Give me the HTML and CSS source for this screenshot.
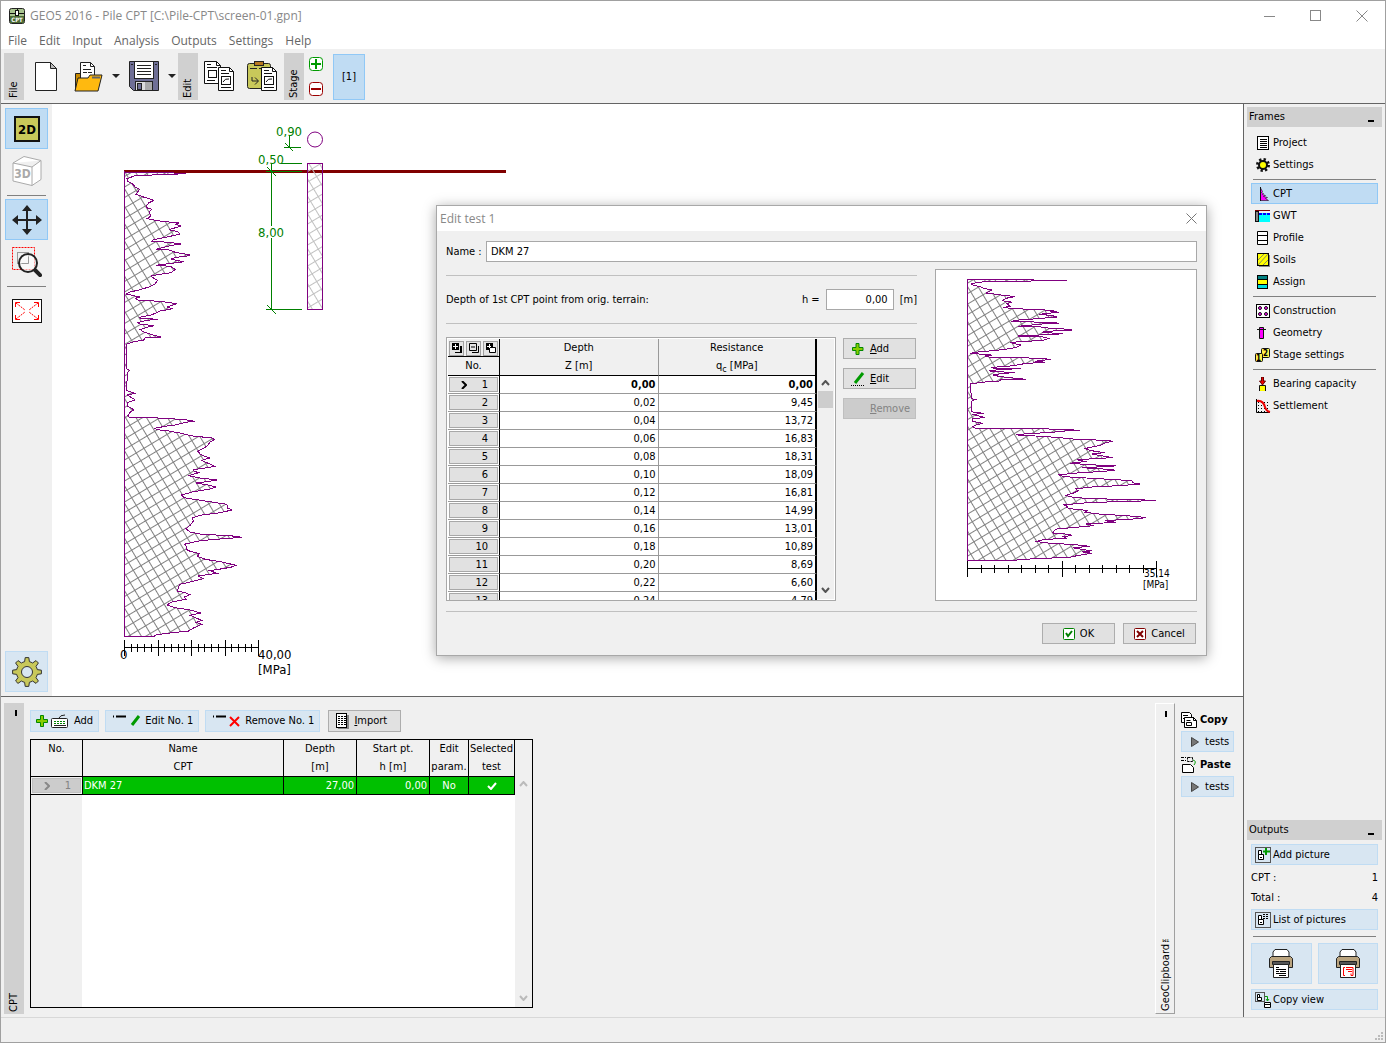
FILE: index.html
```
<!DOCTYPE html>
<html lang="en">

<head>
    <meta charset="UTF-8">
    <meta name="viewport" content="width=device-width, initial-scale=1.0">
    <title>GEO5 2016 - Pile CPT</title>
    <link rel="stylesheet" href="styles.css">
</head>

<body>
    <!-- TITLE BAR -->
    <header class="titlebar">
        <svg width="16" height="16" viewBox="0 0 16 16"><rect x=".5" y=".5" width="15" height="15" rx="2" fill="#a9c48f" stroke="#222"/><rect x="1" y="8" width="14" height="7" fill="#4c6b35"/><path d="M1 5.500h14M8.500 1v2" stroke="#111"/><rect x="6.500" y="2.500" width="3" height="5" fill="#fff" stroke="#111"/><text x="8" y="14" font-size="6" font-weight="bold" text-anchor="middle" class="svgtext" fill="#fff">CPT</text></svg>
        <span class="title">GEO5 2016 - Pile CPT [C:\Pile-CPT\screen-01.gpn]</span>
        <button class="winbtn" aria-label="Minimize"><svg width="12" height="12"><path d="M0 6.500h11" stroke="#888"/></svg></button>
        <button class="winbtn" aria-label="Maximize"><svg width="12" height="12"><rect x=".5" y=".5" width="10" height="10" fill="none" stroke="#888"/></svg></button>
        <button class="winbtn" aria-label="Close"><svg width="12" height="12"><path d="M.5 .5l11 11M11.500 .5l-11 11" stroke="#888"/></svg></button>
    </header>
    <nav class="menubar">
        <a href="#">File</a><a href="#">Edit</a><a href="#">Input</a><a href="#">Analysis</a><a href="#">Outputs</a><a href="#">Settings</a><a href="#">Help</a>
    </nav>

    <!-- TOOLBAR -->
    <div class="toolbar">
        <div class="tab">File</div>
        <button class="tool new" aria-label="New"><svg width="24" height="32"><path d="M1.500 1.500h15l6 6v22h-21z" fill="#fff" stroke="#222"/><path d="M16.500 1.500v6h6z" fill="#bbb" stroke="#222"/></svg></button>
        <button class="tool open" aria-label="Open"><svg width="30" height="32"><path d="M1.500 29V12.500h7l2 3h14V20" fill="#c88a00" stroke="#222"/><path d="M6.500 18V1.500h10l4 4V18z" fill="#fff" stroke="#222"/><path d="M16.500 1.500v4h4M9 4.500h3M9 8.500h8M9 11.500h4M14 11.500h4" fill="none" stroke="#222"/><path d="M1 30l3-13h10l2-3h12l-4 16z" fill="#ffb90f" stroke="#222"/><path d="M18 16.500h8" stroke="#666" stroke-width="2"/></svg></button>
        <button class="tool arrow" aria-label="Open recent"><svg width="8" height="5"><path d="M0 0h8l-4 4z" fill="#222"/></svg></button>
        <button class="tool save" aria-label="Save"><svg width="30" height="31"><path d="M.5 .5h29v29h-25l-4-4z" fill="#6f6f96" stroke="#222"/><rect x="5.500" y=".5" width="19" height="17" fill="#fff" stroke="#222"/><path d="M8 4.500h14M8 7.500h14M8 10.500h14M8 13.500h14M2 3.500h2M26 3.500h2" stroke="#222"/><rect x="6.500" y="20.500" width="17" height="9" fill="#ddd" stroke="#222"/><rect x="8.500" y="22.500" width="4" height="6" fill="#6f6f96" stroke="#222"/><path d="M16 21v8h7v-8z" fill="#aaa"/></svg></button>
        <button class="tool arrow" aria-label="Save as"><svg width="8" height="5"><path d="M0 0h8l-4 4z" fill="#222"/></svg></button>
        <div class="tab">Edit</div>
        <button class="tool copy" aria-label="Copy"><svg width="31" height="31"><path d="M.5 .5h12l4 4v18h-16z" fill="#fff" stroke="#111"/><path d="M12.500 .5v4h4M3 3.500h4M3 6.500h10M3 19.500h8" fill="none" stroke="#111"/><rect x="4.500" y="9.500" width="8" height="7" fill="#fff" stroke="#111"/><path d="M14.500 6.500h11l4 4v19h-15z" fill="#fff" stroke="#111"/><path d="M25.500 6.500v4h4M17 9.500h5M17 12.500h8M17 26.500h10" fill="none" stroke="#111"/><rect x="17.500" y="15.500" width="9" height="8" fill="#fff" stroke="#111"/><path d="M19 21q2-4 6-3" fill="none" stroke="#111"/></svg></button>
        <button class="tool paste" aria-label="Paste"><svg width="31" height="31"><rect x=".5" y="2.500" width="23" height="25" rx="2" fill="#c8c85a" stroke="#222"/><rect x="7.500" y=".5" width="9" height="4" fill="#b87820" stroke="#222"/><path d="M3 7.500h7M12 7.500h8M5 16v4h6M8 16.500l3.500 3.500-3.500 3.500" fill="none" stroke="#222" stroke-width="1"/><path d="M14.500 6.500h11l4 4v19h-15z" fill="#fff" stroke="#111"/><path d="M25.500 6.500v4h4M17 9.500h5M17 12.500h8M17 26.500h10" fill="none" stroke="#111"/><rect x="17.500" y="15.500" width="9" height="8" fill="#fff" stroke="#111"/><path d="M19 21q2-4 6-3" fill="none" stroke="#111"/></svg></button>
        <div class="tab">Stage</div>
        <div class="plusminus">
            <button aria-label="Add stage"><svg width="14" height="14"><rect x=".5" y=".5" width="13" height="13" rx="3" fill="#fff" stroke="#009a00"/><path d="M2 7h10M7 2v10" stroke="#009a00" stroke-width="2"/></svg></button>
            <button aria-label="Remove stage"><svg width="14" height="14"><rect x=".5" y=".5" width="13" height="13" rx="3" fill="#fff" stroke="#9a0000"/><path d="M2 7h10" stroke="#9a0000" stroke-width="2"/></svg></button>
        </div>
        <button class="stage">[1]</button>
    </div>

    <div class="main">
        <div class="left">
            <div class="workspace">
                <!-- VIEW TOOLS -->
                <div class="sidebar">
                    <button class="side active" aria-label="2D"><svg width="26" height="26"><rect x="1" y="1" width="24" height="24" fill="#c8c85a" stroke="#111" stroke-width="2"/><text x="13" y="18" font-size="13" font-weight="bold" text-anchor="middle" class="svgtext">2D</text></svg></button>
                    <button class="side" aria-label="3D"><svg width="30" height="30"><path d="M1 7L12 .5l17 4v19L20 29.500 1 25zM1 7l19 4 9-6.500M20 11v18.500" fill="#fff" stroke="#aaa"/><text x="10.500" y="22" font-size="12" font-weight="bold" text-anchor="middle" class="svgtext" fill="#aaa">3D</text></svg></button>
                    <hr>
                    <button class="side active" aria-label="Move"><svg width="30" height="30"><path d="M2 15h26M15 2v26" stroke="#222" stroke-width="2"/><path d="M15 0l5 6H10zM15 30l5-6H10zM0 15l6-5v10zM30 15l-6-5v10z" fill="#222"/></svg></button>
                    <button class="side" aria-label="Zoom window"><svg width="30" height="30"><rect x=".5" y=".5" width="22" height="22" fill="none" stroke="#f00" stroke-dasharray="2 1"/><rect x="5.500" y="5.500" width="11" height="11" fill="none" stroke="#999"/><circle cx="16" cy="16" r="9" fill="#fff" fill-opacity=".6" stroke="#222" stroke-width="2"/><path d="M9.500 16.500h7v-7" fill="none" stroke="#999"/><path d="M22.500 22.500l7 7" stroke="#222" stroke-width="4"/></svg></button>
                    <hr>
                    <button class="side" aria-label="Fit to screen"><svg width="30" height="24"><rect x=".5" y=".5" width="29" height="23" fill="#fff" stroke="#111"/><path d="M4 4l9 7M26 4l-9 7M4 20l9-7M26 20l-9-7" stroke="#f00" stroke-dasharray="2 1"/><path d="M3.500 8V3.500H8M22 3.500h4.500V8M3.500 16v4.500H8M22 20.500h4.500V16" fill="none" stroke="#f00"/></svg></button>
                    <button class="side light bottom" aria-label="View settings"><svg width="30" height="30" viewBox="-15 -15 30 30"><g fill="#c8c85a" stroke="#333" stroke-linejoin="round"><path id="cog" d="M-2.400 -10.300L-1.800 -14.400H1.800L2.400 -10.300A10.500 10.500 0 0 1 5.600 -9L9 -11.400 11.400 -9 9 -5.600A10.500 10.500 0 0 1 10.300 -2.400L14.400 -1.800V1.800L10.300 2.400A10.500 10.500 0 0 1 9 5.600L11.400 9 9 11.400 5.600 9A10.500 10.500 0 0 1 2.400 10.300L1.800 14.400H-1.800L-2.400 10.300A10.500 10.500 0 0 1 -5.600 9L-9 11.400 -11.400 9 -9 5.600A10.500 10.500 0 0 1 -10.300 2.400L-14.400 1.800V-1.800L-10.300 -2.400A10.500 10.500 0 0 1 -9 -5.600L-11.400 -9 -9 -11.400 -5.600 -9A10.500 10.500 0 0 1 -2.400 -10.300Z"/><circle r="5.500" fill="#d8e6f2"/></g></svg></button>
                </div>

                <!-- DRAWING -->
                <div class="canvas">
                    <svg class="drawing" shape-rendering="crispEdges">
                        <defs>
                            <pattern id="hatch" width="9" height="9" patternUnits="userSpaceOnUse" patternTransform="rotate(-31)"><path d="M0 .5h9M.5 0v9" stroke="#808080" fill="none"/></pattern>
                            <pattern id="hatchLight" width="9" height="9" patternUnits="userSpaceOnUse" patternTransform="rotate(-31)"><path d="M0 .5h9M.5 0v9" stroke="#c0c0c0" fill="none"/></pattern>
                        </defs>
                        <path d="M72 67.500h382" stroke="#800000" stroke-width="3"/>
                        <g id="mainLog"></g>
                        <rect x="255.500" y="59.500" width="15" height="146" fill="url(#hatchLight)" stroke="#800080"/>
                        <circle cx="263" cy="35.500" r="7.500" fill="none" stroke="#800080" shape-rendering="auto"/>
                        <path d="M232 43.500h17M237.500 31v12M233 39l8 8M219.500 60v146M229 59.500h21M214 67.500h36M214 205.500h36M215 63l9 9M215 201l9 9" stroke="#008000" fill="none"/>
                        <path d="M213 122h22v12h-22z" fill="#fff"/>
                        <g class="dims"><text x="224" y="32">0,90</text><text x="206" y="60">0,50</text><text x="206" y="133">8,00</text></g>
                        <path id="mainScale" stroke="#000" fill="none"/>
                        <g class="scale"><text x="68" y="555">0</text><text x="206" y="555">40,00</text><text x="206" y="570">[MPa]</text></g>
                    </svg>

                    <!-- DIALOG -->
                    <section class="dialog">
                        <div class="dialog-title"><span>Edit test 1</span><button class="close" aria-label="Close"><svg width="11" height="11"><path d="M.5 .5l10 10M10.500 .5l-10 10" stroke="#777"/></svg></button></div>
                        <div class="dialog-body">
                            <div class="field"><label for="testName">Name :</label><input type="text" id="testName" value="DKM 27"></div>
                            <div class="dialog-cols">
                                <div class="dialog-form">
                                    <hr>
                                    <div class="depth"><span>Depth of 1st CPT point from orig. terrain:</span><label for="depthH">h =</label><input type="text" id="depthH" value="0,00"><span>[m]</span></div>
                                    <hr>
                                    <div class="points">
                                        <div class="grid">
                                            <table class="pts">
                                                <thead>
                                                    <tr>
                                                        <th class="rowno"><div class="minis">
                                                            <button aria-label="Append row"><svg width="10" height="10"><path d="M0 0h7v7H0zM8 3h2v7H3V9h5z"/><path d="M1 3.500h5M3.500 1v5" stroke="#fff"/></svg></button>
                                                            <button aria-label="Delete row"><svg width="10" height="10"><path d="M.5 .5h7v7h-7zM2 4h4M9.500 3v6.500H3" fill="none" stroke="#000"/></svg></button>
                                                            <button aria-label="Insert row"><svg width="10" height="10"><path d="M0 0h7v7H0z"/><path d="M3.500 4.500h6v5h-6z" fill="#fff" stroke="#000"/><path d="M1 3.500h4M3.500 1v4" stroke="#fff"/></svg></button>
                                                        </div>No.</th>
                                                        <th>Depth<br>Z [m]</th>
                                                        <th>Resistance<br>q<sub>c</sub> [MPa]</th>
                                                    </tr>
                                                </thead>
                                                <tbody id="ptsBody"></tbody>
                                            </table>
                                            <div class="scroll"><svg class="up" width="9" height="6"><path d="M1 5l3.500-4 3.500 4" fill="none" stroke="#555" stroke-width="2"/></svg><span class="thumb"></span><svg class="down" width="9" height="6"><path d="M1 1l3.500 4 3.500-4" fill="none" stroke="#555" stroke-width="2"/></svg></div>
                                        </div>
                                        <div class="actions">
                                            <button class="btn"><svg width="14" height="14"><path d="M5 1.500h3v4h4v3h-4v4H5v-4H1.500v-3H5z" fill="#8c0" stroke="#080"/></svg><span><u>A</u>dd</span></button>
                                            <button class="btn"><svg width="14" height="14"><path d="M4 11L12 1" stroke="#009a00" stroke-width="3"/><path d="M0 13.500h13" stroke="#000" stroke-dasharray="1 1"/></svg><span><u>E</u>dit</span></button>
                                            <button class="btn" disabled><svg width="14" height="14"></svg><span><u>R</u>emove</span></button>
                                        </div>
                                    </div>
                                </div>
                                <div class="preview">
                                    <svg width="260" height="330" shape-rendering="crispEdges">
                                        <g id="previewLog"></g>
                                        <path id="previewScale" stroke="#000" fill="none"/>
                                        <g class="small"><text x="208" y="307">35,14</text><text x="207" y="318">[MPa]</text></g>
                                    </svg>
                                </div>
                            </div>
                            <hr>
                            <div class="confirm">
                                <button class="btn"><svg width="12" height="12"><rect x=".5" y=".5" width="11" height="11" rx="1" fill="#fff" stroke="#008000"/><path d="M3 5l2 3 4-5" fill="none" stroke="#008000" stroke-width="2"/></svg><span>OK</span></button>
                                <button class="btn"><svg width="12" height="12"><rect x=".5" y=".5" width="11" height="11" rx="1" fill="#fff" stroke="#800000"/><path d="M3 3l6 6M9 3l-6 6" stroke="#800000" stroke-width="2"/></svg><span>Cancel</span></button>
                            </div>
                        </div>
                    </section>
                </div>
            </div>

            <!-- BOTTOM FRAME -->
            <div class="frame">
                <div class="tab tall"><i class="pin"></i>CPT</div>
                <div class="tests">
                    <div class="testbar">
                        <button class="lbtn"><svg width="34" height="16"><path d="M4.500 2.500h3v4h4v3h-4v4h-3v-4H.5v-3h4z" fill="#8c0" stroke="#080"/><rect x="15.500" y="5.500" width="16" height="9" rx="1" fill="#fff" stroke="#222"/><path d="M18 8.500h12M18 10.500h12" stroke="#008000" stroke-width="1" stroke-dasharray="2 1"/><path d="M18 12.500h12M23 5q1-3 6-3" stroke="#222" fill="none"/></svg><span>Add</span></button>
                        <button class="lbtn"><svg width="30" height="16"><path d="M2 3.500h1M5 3.500h10" stroke="#000" stroke-width="2"/><path d="M21 12l7-9" stroke="#009a00" stroke-width="3"/></svg><span>Edit No. 1</span></button>
                        <button class="lbtn"><svg width="30" height="16"><path d="M2 3.500h1M5 3.500h10" stroke="#000" stroke-width="2"/><path d="M19 4l9 9M28 4l-9 9" stroke="#f00" stroke-width="2"/></svg><span>Remove No. 1</span></button>
                        <button class="btn import"><svg width="13" height="16"><rect x="2" y="2" width="11" height="14" fill="#888"/><rect x=".5" y=".5" width="10" height="14" fill="#fff" stroke="#000"/><path d="M3 3v9M6 3v9M9 3v9" stroke="#000" stroke-dasharray="1 1" stroke-width="2"/></svg><span><u>I</u>mport</span></button>
                    </div>
                    <div class="testgrid">
                        <div class="testmain">
                            <table class="tst">
                                <thead>
                                    <tr><th class="c1">No.<br>&nbsp;</th><th class="c2">Name<br>CPT</th><th class="c3">Depth<br>[m]</th><th class="c3">Start pt.<br>h [m]</th><th class="c5">Edit<br>param.</th><th class="c6">Selected<br>test</th></tr>
                                </thead>
                                <tbody>
                                    <tr><th class="head"><div><svg width="6" height="8"><path d="M1 0l4 4-4 4" fill="none" stroke="#888" stroke-width="2"/></svg>1</div></th><td>DKM 27</td><td class="num">27,00</td><td class="num">0,00</td><td class="mid">No</td><td class="mid"><svg width="10" height="8"><path d="M1 4l3 3 5-6" fill="none" stroke="#fff" stroke-width="2"/></svg></td></tr>
                                </tbody>
                            </table>
                            <div class="blank"></div>
                        </div>
                        <div class="scroll faint"><svg class="up" width="9" height="6"><path d="M1 5l3.500-4 3.500 4" fill="none" stroke="#bbb" stroke-width="2"/></svg><svg class="down" width="9" height="6"><path d="M1 1l3.500 4 3.500-4" fill="none" stroke="#bbb" stroke-width="2"/></svg></div>
                    </div>
                </div>
                <div class="tab tall geo"><i class="pin"></i>GeoClipboard™</div>
                <div class="clip">
                    <div class="cliphead"><svg width="16" height="16"><path d="M.5 .5h8l2 2v8H.5zM2 3.500h5M2 6.500h3" fill="#fff" stroke="#000"/><path d="M3.500 5.500h9l3 3v7h-12z" fill="#fff" stroke="#000"/><path d="M12.500 5v3.500h3M5.500 8.500h4M5.500 10.500h5v3h-5z" fill="none" stroke="#000"/></svg>Copy</div>
                    <button class="lbtn play"><svg width="8" height="10"><path d="M.5 .5l7 4.500-7 4.500z" fill="#777" stroke="#444"/></svg><span>tests</span></button>
                    <div class="cliphead"><svg width="16" height="16"><path d="M0 .5h5M0 3.500h5M6.500 .5h5v4h-5z" fill="none" stroke="#000" stroke-dasharray="3 1"/><path d="M1.500 7.500h8l3 3v5h-11z" fill="#fff" stroke="#000"/><path d="M12 3q4 1 1 5" fill="none" stroke="#009a00" stroke-width="1"/></svg>Paste</div>
                    <button class="lbtn play"><svg width="8" height="10"><path d="M.5 .5l7 4.500-7 4.500z" fill="#777" stroke="#444"/></svg><span>tests</span></button>
                </div>
            </div>
        </div>

        <!-- RIGHT PANEL -->
        <aside class="panel">
            <h2>Frames<i></i></h2>
            <div class="list">
                <button class="item"><svg width="16" height="14"><rect x="2.500" y=".5" width="11" height="13" fill="#fff" stroke="#000"/><path d="M5 3.500h7M5 5.500h7M5 7.500h7M5 9.500h7M5 11.500h7" stroke="#000"/></svg>Project</button>
                <button class="item"><svg width="16" height="14"><circle cx="8" cy="7" r="5.500" fill="none" stroke="#111" stroke-width="3" stroke-dasharray="2.200 2.100"/><circle cx="8" cy="7" r="4" fill="#ff0" stroke="#111" stroke-width="2"/></svg>Settings</button>
                <hr>
                <button class="item active"><svg width="16" height="14"><path d="M5.500 1v12.500h8l-3-2 2-1-4-1 2-1-3-1 1-1-2-1 1-1z" fill="#f0f" stroke="#111" stroke-width=".6"/><path d="M5.500 0v14" stroke="#111"/></svg>CPT</button>
                <button class="item"><svg width="16" height="14"><path d="M0 1.500h15" stroke="#800000"/><rect x="4" y="4" width="11" height="9" fill="#0ff"/><path d="M4 5h11" stroke="#00f" stroke-width="2" stroke-dasharray="3 1"/><rect x=".5" y="2.500" width="3" height="10" fill="#888" stroke="#111"/></svg>GWT</button>
                <button class="item"><svg width="16" height="14"><path d="M2.500 .5h10v13h-10zM2.500 4.500h10M2.500 9.500h10" fill="#fff" stroke="#000"/></svg>Profile</button>
                <button class="item"><svg width="16" height="14"><rect x="4" y="2" width="11" height="12" fill="#888"/><rect x="2.500" y=".5" width="11" height="12" fill="#ff0" stroke="#000"/><path d="M3 7l6-6M3 12l10-11M8 12l5-5" stroke="#886"/></svg>Soils</button>
                <button class="item"><svg width="16" height="14"><rect x="2.500" y=".5" width="10" height="13" fill="#ff0" stroke="#000"/><path d="M3 2.500h9" stroke="#008080" stroke-width="3"/><path d="M3 11.500h9" stroke="#0dd" stroke-width="3"/><path d="M2 4.500h11M2 9.500h11" stroke="#000"/></svg>Assign</button>
                <hr>
                <button class="item"><svg width="16" height="14"><rect x="1.500" y=".5" width="13" height="13" fill="#fff" stroke="#000"/><g fill="#f0f" stroke="#111"><circle cx="5" cy="4" r="1.500"/><circle cx="11" cy="4" r="1.500"/><circle cx="5" cy="10" r="1.500"/><circle cx="11" cy="10" r="1.500"/></g></svg>Construction</button>
                <button class="item"><svg width="16" height="14"><path d="M4.500 1.500h4v11h-4z" fill="#f0f" stroke="#111"/><path d="M2 3.500h9" stroke="#111"/></svg>Geometry</button>
                <button class="item"><svg width="16" height="14"><g fill="#fff04a" stroke="#111"><rect x="6.500" y=".5" width="8" height="9" rx="1"/><rect x=".5" y="5.500" width="7" height="8" rx="1"/></g><g class="svgtext" font-size="8" font-weight="bold"><text x="8" y="8">2</text><text x="1" y="13">1</text></g></svg>Stage settings</button>
                <hr>
                <button class="item"><svg width="16" height="14"><path d="M4.500 8.500h6v6h-6z" fill="#ff0" stroke="#111"/><path d="M6.500 0h2v4h2l-3 4-3-4h2z" fill="#e00" stroke="#600"/></svg>Bearing capacity</button>
                <button class="item"><svg width="16" height="14"><path d="M3 3.500h12M3 6.500h12M3 9.500h12M3 12.500h12" stroke="#000" stroke-dasharray="1 2"/><path d="M1.500 0v13.500H15" fill="none" stroke="#000"/><path d="M2 2q6-1 8 6 1 4 5 5" fill="none" stroke="#e00" stroke-width="2"/></svg>Settlement</button>
            </div>
            <h2 class="outputs">Outputs<i></i></h2>
            <div class="list pictures">
                <button class="item light"><svg width="16" height="16"><rect x=".5" y=".5" width="15" height="15" fill="none" stroke="#555"/><path d="M3.500 3.500h3v4h-3zM3.500 7.500h5v5h-5zM5 10.500h2" fill="#fff" stroke="#000"/><path d="M11 1v7M8 4.500h7" stroke="#009a00" stroke-width="2"/></svg>Add picture</button>
                <div class="count"><span>CPT :</span><span>1</span></div>
                <div class="count"><span>Total :</span><span>4</span></div>
                <button class="item light"><svg width="16" height="16"><rect x=".5" y=".5" width="15" height="15" fill="none" stroke="#555"/><path d="M3.500 3.500h3v4h-3zM3.500 7.500h5v5h-5zM5 10.500h2" fill="#fff" stroke="#000"/><path d="M8 2.500h6M8 4.500h6M8 6.500h6" stroke="#000" stroke-dasharray="2 1"/></svg>List of pictures</button>
                <hr>
                <div class="printers">
                    <button class="print" aria-label="Print"><svg width="24" height="30"><path d="M4 8V3l2-2.500h12L20 3v5z" fill="#fff" stroke="#222"/><path d="M.5 9.500l2-2h19l2 2v9h-23z" fill="#b9a37e" stroke="#222"/><path d="M3.500 12.500h17v3h-17z" fill="#555" stroke="#222"/><path d="M4.500 15.500h15v13h-15z" fill="#fff" stroke="#222"/><path d="M7 18.500h3M7 20.500h10M7 22.500h3M11 22.500h6M7 24.500h10M10 26.500h7" stroke="#000"/></svg></button>
                    <button class="print" aria-label="Print view"><svg width="24" height="30"><path d="M4 8V3l2-2.500h12L20 3v5z" fill="#fff" stroke="#222"/><path d="M.5 9.500l2-2h19l2 2v9h-23z" fill="#b9a37e" stroke="#222"/><path d="M3.500 12.500h17v3h-17z" fill="#555" stroke="#222"/><path d="M4.500 15.500h15v13h-15z" fill="#fff" stroke="#222"/><path d="M9 18.500H7.500v8H9M10 18.500h7v8h-2v-2M10 20.500h6M12 22.500h4" fill="none" stroke="#f00"/></svg></button>
                </div>
                <button class="item light"><svg width="16" height="16"><rect x=".5" y=".5" width="9" height="9" fill="none" stroke="#555"/><path d="M2.500 2.500h2v3h-2zM2.500 5.500h4v3h-4z" fill="#fff" stroke="#000"/><path d="M10 4.500h2.500v4M11 7l1.500 2 1.500-2" fill="none" stroke="#009a00"/><path d="M9.500 10.500h6v5h-6zM9 12.500h7" fill="#fff" stroke="#000"/></svg>Copy view</button>
            </div>
        </aside>
    </div>

    <footer class="status"><svg width="10" height="10" fill="#bbb"><path d="M6 0h2v2H6zM3 3h2v2H3zM6 3h2v2H6zM0 6h2v2H0zM3 6h2v2H3zM6 6h2v2H6z"/></svg></footer>

    <script src="script.js"></script>
</body>

</html>
```

FILE: styles.css
```
* {
    box-sizing: border-box;
}

body {
    margin: 0;
    min-height: 100vh;
    display: flex;
    flex-direction: column;
    border: 1px solid #a0a0a0;
    background: #f0f0f0;
    color: #000;
    font: 11px/18px "DejaVu Sans Condensed", "DejaVu Sans", sans-serif;
}

button,
input {
    font: inherit;
    color: inherit;
}

button {
    border: 0;
    padding: 0;
    background: none;
    display: flex;
    align-items: center;
}

svg {
    display: block;
    flex: none;
}

hr {
    border: 0;
    height: 1px;
    margin: 0;
    background: #808080;
}

.svgtext {
    font-family: "DejaVu Sans Condensed", sans-serif;
}

/* title and menu */
.titlebar {
    display: flex;
    align-items: center;
    height: 29px;
    padding-left: 8px;
    background: #fff;
    color: #888;
    font: 12px/18px "Open Sans", sans-serif;
}

.title {
    flex: 1;
    margin-left: 5px;
}

.winbtn {
    width: 46px;
    height: 28px;
    justify-content: center;
}

.menubar {
    display: flex;
    gap: 12px;
    padding: 2px 7px 0;
    height: 19px;
    background: #fff;
    font: 12px/17px "Open Sans", sans-serif;
}

.menubar a {
    color: #666;
    text-decoration: none;
}

/* toolbar */
.toolbar {
    display: flex;
    align-items: center;
    height: 55px;
    padding: 1px 3px 0;
    border-bottom: 1px solid #646464;
}

.tab {
    width: 20px;
    height: 47px;
    padding: 2px 0;
    background: #d0d0d0;
    writing-mode: vertical-rl;
    transform: rotate(180deg);
    line-height: 20px;
    text-align: left;
}

.tool {
    height: 40px;
    justify-content: center;
}

.new {
    width: 44px;
}

.open {
    width: 42px;
}

.arrow {
    width: 12px;
}

.save {
    width: 44px;
}

.copy,
.paste {
    width: 43px;
}

.plusminus {
    display: flex;
    flex-direction: column;
    gap: 11px;
    margin: 0 10px 0 5px;
}

.stage {
    width: 32px;
    height: 46px;
    justify-content: center;
    background: #c0dcf3;
    border: 1px solid #90c8f6;
}

/* workspace */
.main,
.workspace {
    display: flex;
    flex: 1;
}

.left {
    flex: 1;
    min-width: 0;
    display: flex;
    flex-direction: column;
}

.sidebar {
    display: flex;
    flex-direction: column;
    gap: 1px;
    width: 51px;
    padding: 4px;
}

.sidebar hr {
    width: 39px;
    margin: 3px 2px 2px;
}

.side {
    width: 43px;
    height: 41px;
    justify-content: center;
    border: 1px solid transparent;
}

.side.active,
.item.active {
    background: #c0dcf3;
    border-color: #90c8f6;
}

.side.light {
    background: #d8e6f2;
    border-color: #c0dcf3;
}

.bottom {
    margin-top: auto;
}

.canvas {
    position: relative;
    flex: 1;
    background: #fff;
}

.drawing {
    width: 100%;
    height: 100%;
    min-height: 580px;
}

.dims {
    fill: #008000;
    font-size: 13px;
}

.scale {
    font-size: 13px;
}

.small {
    font-size: 10px;
}

/* dialog */
.dialog {
    position: absolute;
    left: 384px;
    top: 101px;
    width: 771px;
    border: 1px solid #a8a8a8;
    background: #f0f0f0;
    box-shadow: 0 2px 12px rgba(0, 0, 0, .35);
}

.dialog-title {
    display: flex;
    align-items: center;
    justify-content: space-between;
    height: 25px;
    padding: 0 9px 0 3px;
    background: #fff;
    color: #888;
    font: 12px/18px "Open Sans", sans-serif;
}

.dialog-body {
    padding: 10px 9px 11px;
}

.dialog hr {
    background: #c0c0c0;
}

.dialog input {
    height: 21px;
    padding: 0 5px;
    border: 1px solid #a8a8a8;
    background: #fff;
}

.field {
    display: flex;
    align-items: center;
    gap: 5px;
}

.field label {
    width: 35px;
    white-space: nowrap;
}

.field .wide,
.field input {
    flex: 1;
    padding: 0 4px;
}

.dialog-cols {
    display: flex;
    gap: 18px;
    margin: 7px 0 10px;
}

.dialog-form {
    flex: 1;
    padding-top: 6px;
}

.depth {
    display: flex;
    align-items: center;
    gap: 6px;
    height: 47px;
}

.depth span:first-child {
    flex: 1;
}

.depth input {
    width: 68px;
    text-align: right;
}

.points {
    display: flex;
    gap: 7px;
    margin-top: 13px;
}

.grid {
    flex: 1;
    display: flex;
    height: 264px;
    overflow: hidden;
    padding: 1px;
    border: 1px solid #a8a8a8;
    background: #fff;
}

.pts {
    flex: 1;
    width: 100%;
    align-self: flex-start;
    border-spacing: 0;
    table-layout: fixed;
}

.pts th {
    padding: 0;
    height: 36px;
    font-weight: normal;
    background: #f0f0f0;
    border-right: 1px solid #999;
    border-bottom: 1px solid #000;
}

.pts sub {
    font-size: 9px;
    line-height: 1px;
}

.pts th.rowno {
    width: 52px;
}

.pts th:first-child {
    border-right-color: #000;
}

.pts th:last-child,
.pts td:last-child {
    border-right: 2px solid #000;
}

.pts td {
    height: 18px;
    padding: 0 2px;
    line-height: 17px;
    text-align: right;
    background: #fff;
    border-right: 1px solid #999;
    border-bottom: 1px solid #999;
}

.pts tbody th {
    height: 18px;
    border-right: 1px solid #000;
    border-bottom-color: #999;
    background: #fff;
}

.pts tr:first-child td {
    font-weight: bold;
}

.minis {
    display: flex;
    gap: 2px;
    height: 17px;
    padding: 1px;
    border-bottom: 1px solid #000;
}

.minis button {
    width: 15px;
    height: 15px;
    justify-content: center;
    border: 1px solid #a0a0a0;
    background: #e4e4e4;
}

.rowbtn,
.head div {
    display: flex;
    align-items: center;
    justify-content: flex-end;
    gap: 15px;
    height: 15px;
    margin: 1px;
    padding-right: 9px;
    border: 1px solid #a8a8a8;
    background: #e1e1e1;
}

.scroll {
    flex: none;
    display: flex;
    flex-direction: column;
    align-items: center;
    width: 17px;
    padding: 41px 0 6px;
    background: #f0f0f0;
}

.thumb {
    width: 15px;
    height: 17px;
    margin-top: 5px;
    background: #cdcdcd;
}

.down {
    margin-top: auto;
}

.actions {
    display: flex;
    flex-direction: column;
    gap: 9px;
    width: 73px;
    padding-top: 1px;
    margin-right: 1px;
}

.btn {
    gap: 5px;
    height: 21px;
    padding: 0 7px;
    border: 1px solid #adadad;
    background: #e1e1e1;
}

.btn:disabled {
    color: #838383;
    background: #ccc;
    border-color: #bfbfbf;
}

.preview {
    width: 262px;
    border: 1px solid #a8a8a8;
    background: #fff;
}

.confirm {
    display: flex;
    justify-content: flex-end;
    gap: 8px;
    margin-top: 11px;
    padding-right: 1px;
}

.confirm .btn {
    width: 73px;
    justify-content: center;
}

/* bottom frame */
.frame {
    display: flex;
    height: 321px;
    padding: 6px 3px 3px;
    border-top: 1px solid #646464;
}

.tall {
    height: auto;
    position: relative;
}

.pin {
    position: absolute;
    left: 7px;
    bottom: 7px;
    width: 2px;
    height: 6px;
    background: #000;
}

.tests {
    flex: 1;
    display: flex;
    flex-direction: column;
    gap: 7px;
    padding: 7px 6px 6px;
}

.testbar {
    display: flex;
    gap: 6px;
}

.lbtn {
    gap: 4px;
    height: 22px;
    padding: 0 5px;
    border: 1px solid #c0dcf3;
    background: #d8e6f2;
}

.import {
    height: 22px;
    width: 73px;
    margin-left: 2px;
}

.testgrid {
    flex: 1;
    display: flex;
    width: 503px;
    border: 1px solid #000;
}

.testmain {
    flex: 1;
    display: flex;
    flex-direction: column;
}

.tst {
    width: 100%;
    border-spacing: 0;
    table-layout: fixed;
}

.tst th,
.tst td {
    padding: 0 1px;
    font-weight: normal;
    border-right: 1px solid #000;
    border-bottom: 1px solid #000;
}

.tst td {
    height: 18px;
    line-height: 17px;
    color: #fff;
    background: #00c000;
}

.c1 {
    width: 52px;
}

.c2 {
    width: 201px;
}

.c3 {
    width: 73px;
}

.c5 {
    width: 39px;
}

.c6 {
    width: 46px;
    white-space: nowrap;
}

.tst .num {
    padding-right: 2px;
    text-align: right;
}

.tst .mid {
    text-align: center;
}

.mid svg {
    margin: auto;
}

.tst .head {
    padding: 0;
}

.head div {
    color: #838383;
    background: #ccc;
    border-color: #bfbfbf;
}

.blank {
    flex: 1;
    margin: 0 0 0 51px;
    background: #fff;
}

.geo {
    background: #f0f0f0;
    border-right: 1px solid #fff;
    border-bottom: 1px solid #fff;
    border-left: 1px solid #a0a0a0;
    border-top: 1px solid #a0a0a0;
}

.clip {
    display: flex;
    flex-direction: column;
    width: 65px;
    padding: 5px 6px 0;
}

.cliphead {
    display: flex;
    align-items: center;
    gap: 3px;
    height: 23px;
    font-weight: bold;
}

.play {
    height: 21px;
    gap: 6px;
    padding-left: 9px;
    margin-bottom: 1px;
}

/* right panel */
.panel {
    display: flex;
    flex-direction: column;
    width: 142px;
    padding: 3px 3px 2px;
    border-left: 1px solid #646464;
}

.panel h2 {
    display: flex;
    justify-content: space-between;
    height: 20px;
    margin: 0;
    padding: 0 8px 0 2px;
    background: #d0d0d0;
    font-size: 11px;
    font-weight: normal;
    line-height: 20px;
}

.panel h2 i {
    width: 6px;
    height: 2px;
    margin-top: 13px;
    background: #000;
}

.panel .outputs {
    margin-top: auto;
}

.list {
    padding: 5px 4px 4px;
}

.list.pictures {
    padding-top: 4px;
}

.list hr {
    margin: 4px 2px 3px;
}

.item {
    gap: 2px;
    width: 100%;
    height: 21px;
    margin-bottom: 1px;
    padding: 0 3px;
    border: 1px solid transparent;
    white-space: nowrap;
}

.item.light,
.print {
    background: #d8e6f2;
    border: 1px solid #c0dcf3;
}

.count {
    display: flex;
    justify-content: space-between;
    line-height: 20px;
}

.count + .item {
    margin: 1px 0 6px;
}

.item + .count {
    margin-top: 3px;
}

.printers {
    display: flex;
    gap: 6px;
    margin: 6px 0 5px;
}

.print {
    flex: 1;
    height: 41px;
    justify-content: center;
}

.status {
    display: flex;
    align-items: flex-end;
    justify-content: flex-end;
    height: 25px;
    border-top: 1px solid #d8d8d8;
}
```

FILE: script.js
```
// CPT log: resistance, depth (drawing units)
const log = "0,0 147,3 185,5 107,8 32,11 7,20 9,27 23,35 32,45 45,52 35,67 57,75 88,85 72,93 65,103 69,108 82,112 74,120 79,133 67,140 107,147 162,153 154,157 170,162 133,173 157,178 167,186 137,193 87,203 83,208 132,211 170,216 142,220 94,232 132,233 152,241 195,248 194,251 157,256 139,261 162,266 178,269 142,274 94,280 137,283 152,292 140,302 107,307 79,312 90,320 100,325 92,335 79,343 47,353 17,360 5,366 45,375 32,379 42,385 107,388 156,395 127,405 145,410 107,417 97,422 77,430 45,436 47,439 100,442 67,445 40,452 47,456 89,461 67,466 47,473 60,481 82,488 110,495 62,498 57,505 32,508 6,517 7,590 15,595 8,603 7,656 30,664 9,669 32,684 10,691 9,703 28,713 17,721 10,730 15,737 85,737 137,740 182,743 211,748 182,751 157,758 122,763 91,769 97,773 127,776 167,783 197,791 262,798 271,802 257,810 247,823 220,838 229,848 256,858 232,865 247,872 271,883 242,888 207,893 209,898 223,902 192,911 227,918 277,924 247,929 214,933 247,938 275,945 257,951 207,959 170,969 179,977 222,984 267,991 307,997 309,1008 322,1014 287,1022 232,1029 202,1038 207,1047 197,1060 184,1070 197,1080 232,1087 317,1091 353,1096 297,1100 227,1106 179,1117 187,1125 185,1132 197,1138 224,1145 219,1153 242,1162 297,1171 334,1180 319,1186 257,1196 277,1204 222,1212 237,1220 212,1226 167,1237 162,1245 159,1257 182,1262 196,1268 179,1275 185,1282 142,1290 127,1299 152,1307 197,1314 229,1323 197,1330 217,1339 232,1345 215,1351 232,1357 207,1368 192,1377 137,1383 97,1388 87,1394 0,1394"
    .split(" ").map(p => p.split(",").map(Number));

function drawLog(id, x0, y0, sx, sy) {
    const pts = log.map(([x, y]) => `${(x0 + x * sx).toFixed(1)},${(y0 + y * sy).toFixed(1)}`).join(" ");
    document.getElementById(id).innerHTML = `<polygon points="${pts}" fill="#fff"/><polygon points="${pts}" fill="url(#hatch)" stroke="#800080"/>`;
}

function drawScale(id, x0, y, width, count, major) {
    let d = `M${x0} ${y}h${width}`;
    for (let i = 0; i <= count; i++) {
        const x = Math.round(x0 + i * width / count - 0.5) + 0.5;
        d += i % major == 0 ? `M${x} ${y - 8}v16` : `M${x} ${y - 4}v8`;
    }
    document.getElementById(id).setAttribute("d", d);
}

drawLog("mainLog", 72.5, 68, 1 / 3, 1 / 3);
drawScale("mainScale", 72.5, 543.5, 134, 20, 5);
drawLog("previewLog", 31.5, 9.5, 0.535, 0.2017);
drawScale("previewScale", 31.5, 298.5, 189, 14, 7);

// CPT points
const rows = [["0,00", "0,00"], ["0,02", "9,45"], ["0,04", "13,72"], ["0,06", "16,83"], ["0,08", "18,31"], ["0,10", "18,09"], ["0,12", "16,81"],
    ["0,14", "14,99"], ["0,16", "13,01"], ["0,18", "10,89"], ["0,20", "8,69"], ["0,22", "6,60"], ["0,24", "4,79"]];
const arrow = `<svg width="6" height="8"><path d="M1 0l4 4-4 4" fill="none" stroke="#000" stroke-width="2"/></svg>`;
document.getElementById("ptsBody").innerHTML = rows.map((r, i) =>
    `<tr><th><div class="rowbtn">${i == 0 ? arrow : ""}${i + 1}</div></th><td>${r[0]}</td><td>${r[1]}</td></tr>`).join("");
```
